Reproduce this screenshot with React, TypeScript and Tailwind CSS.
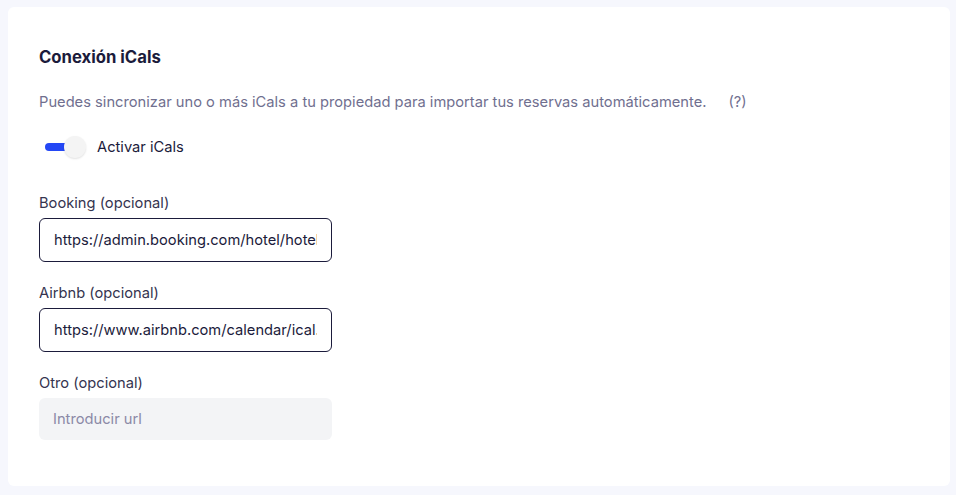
import React from "react";

export default function App() {
  return (
    <div className="w-[956px] h-[495px] bg-[#f6f7fd] pt-[7px] pl-[8px] pr-[6px] pb-[9px]" style={{ fontFamily: "Inter, 'Noto Sans', sans-serif" }}>
      <div className="h-full bg-white rounded-[6px] pl-[31px] pt-[38px]">
        <h2 className="text-[16.7px] leading-[24px] font-bold text-[#1b1b3b]">Conexión iCals</h2>
        <div className="mt-[23px] flex items-center text-[14.7px] leading-[20px] text-[#706f8f]">
          <span>Puedes sincronizar uno o más iCals a tu propiedad para importar tus reservas automáticamente.</span>
          <span className="ml-[22px]">(?)</span>
        </div>
        <div className="mt-[22px] flex items-center h-[26px]">
          <div className="relative w-[42px] h-[24px] ml-[6px]">
            <div className="absolute left-0 top-[8px] w-[26px] h-[8px] rounded-full bg-[#2447f5]" />
            <div className="absolute left-[19px] top-[1px] w-[22px] h-[22px] rounded-full bg-[#f4f4f4] shadow-[0_1px_2px_rgba(0,0,0,0.12)]" />
          </div>
          <span className="ml-[10px] text-[14.7px] text-[#1b1b3b]">Activar iCals</span>
        </div>
        <div className="mt-[33px] flex flex-col">
          <label className="text-[14.7px] leading-[20px] text-[#35344f]">Booking (opcional)</label>
          <input
            readOnly
            value="https://admin.booking.com/hotel/hoteladmin/ical.html"
            className="mt-[5px] w-[293px] h-[44px] rounded-[6px] border border-[#1b1b3b] px-[14px] text-[14.7px] text-[#1b1b3b] outline-none"
          />
          <label className="mt-[21px] text-[14.7px] leading-[20px] text-[#35344f]">Airbnb (opcional)</label>
          <input
            readOnly
            value="https://www.airbnb.com/calendar/ical.ics"
            className="mt-[5px] w-[293px] h-[44px] rounded-[6px] border border-[#1b1b3b] px-[14px] text-[14.7px] text-[#1b1b3b] outline-none"
          />
          <label className="mt-[21px] text-[14.7px] leading-[20px] text-[#35344f]">Otro (opcional)</label>
          <input
            placeholder="Introducir url"
            className="mt-[5px] w-[293px] h-[42px] rounded-[6px] bg-[#f3f4f6] px-[14px] text-[14.7px] text-[#1b1b3b] placeholder:text-[#8b89a6] outline-none"
          />
        </div>
      </div>
    </div>
  );
}
